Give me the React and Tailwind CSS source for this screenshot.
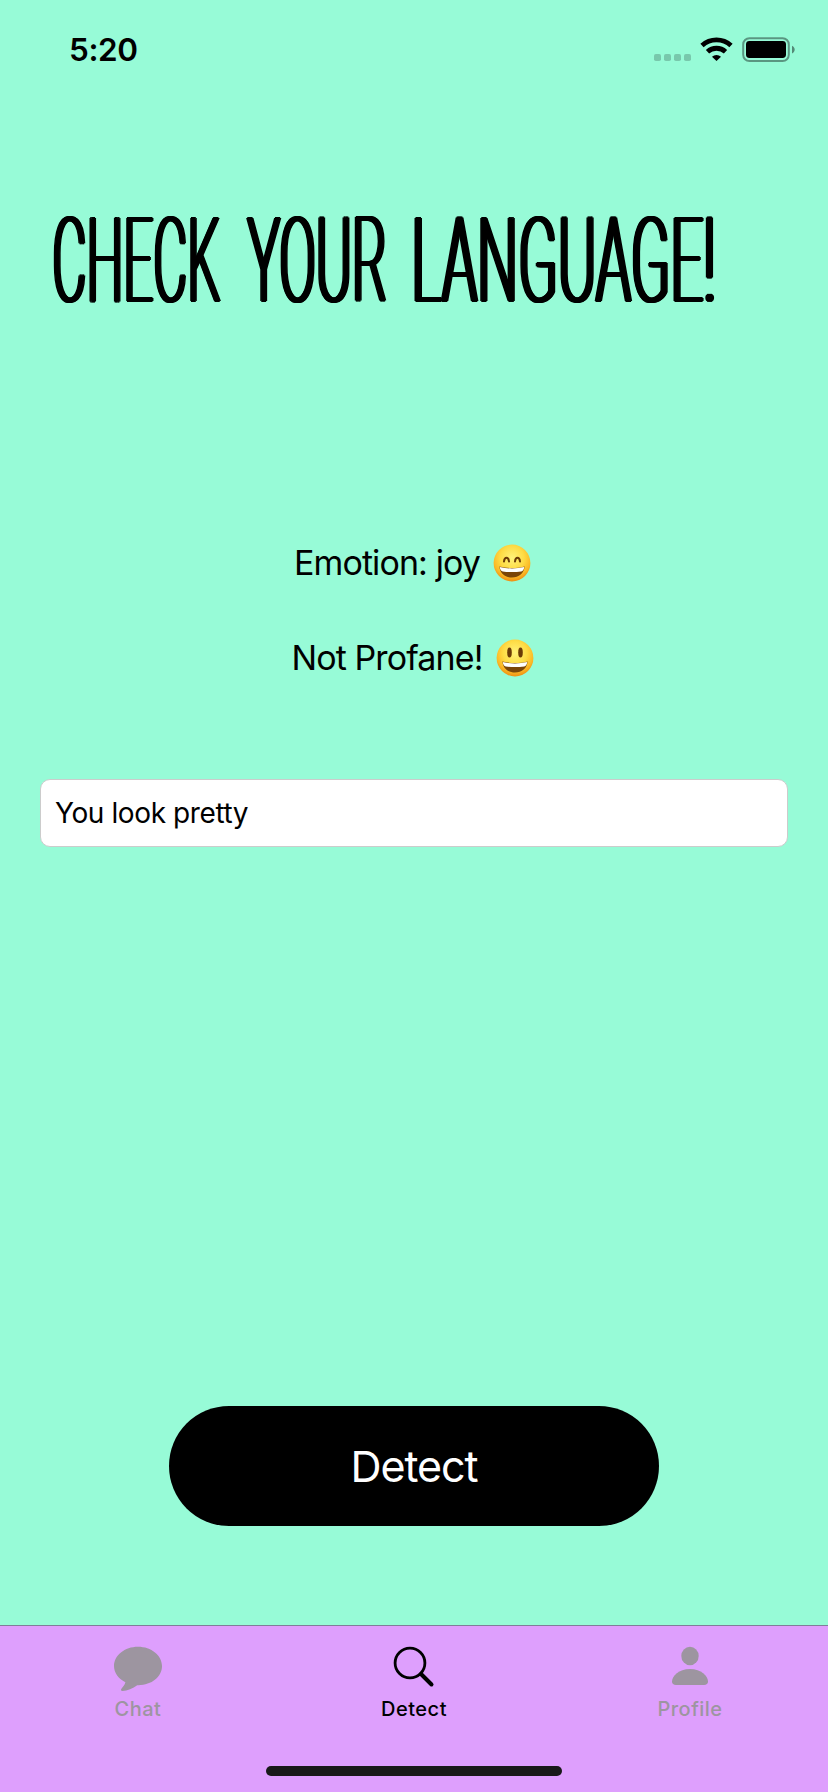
import React, { useState } from 'react';

const titleWords = [
  { text: 'CHECK', box: 'w-[195px]', scale: 'scale-x-[0.438]' },
  { text: 'YOUR', box: 'w-[164px]', scale: 'scale-x-[0.455]' },
  { text: 'LANGUAGE!', box: 'w-[304px]', scale: 'scale-x-[0.485]' },
];

const StatusBar = () => (
  <div className="flex h-[100px] items-center justify-between pl-[69px] pr-[32px]">
    <span className="text-[31.5px] leading-[40px] font-semibold tracking-[-0.4px]">5:20</span>
    <svg width="142" height="26" viewBox="0 0 142 26" fill="none">
      <g fill="#000" fillOpacity="0.2">
        <rect x="0" y="17" width="7" height="7" rx="1.8" />
        <rect x="10" y="17" width="7" height="7" rx="1.8" />
        <rect x="20" y="17" width="7" height="7" rx="1.8" />
        <rect x="30" y="17" width="7" height="7" rx="1.8" />
      </g>
      <g stroke="#000" strokeWidth="4.8">
        <path d="M48 8.6a21.5 21.5 0 0 1 29 0" />
        <path d="M53.5 14.8a13.2 13.2 0 0 1 18 0" />
      </g>
      <path d="M62.5 24l-4.500-4.300a6.500 6.500 0 0 1 9 0z" fill="#000" />
      <rect x="89.200" y="1.200" width="45.600" height="22.800" rx="6.200" stroke="#000" strokeOpacity="0.4" strokeWidth="2" />
      <rect x="92" y="4" width="40" height="17" rx="3.400" fill="#000" />
      <path d="M138 8.800c3.600 1.600 3.600 6 0 7.600z" fill="#000" fillOpacity="0.45" />
    </svg>
  </div>
);

const EmojiFace = ({ id, children }) => (
  <svg width="38" height="38" viewBox="0 0 38 38">
    <defs>
      <radialGradient id={id} cx="0.5" cy="0.36" r="0.64">
        <stop offset="0" stopColor="#fff27a" />
        <stop offset="0.5" stopColor="#fedc45" />
        <stop offset="0.8" stopColor="#fbb926" />
        <stop offset="1" stopColor="#ee8e12" />
      </radialGradient>
    </defs>
    <circle cx="19" cy="19" r="18.4" fill={`url(#${id})`} />
    {children}
    <path d="M6.4 22.6c8 2 17.200 2 25.200 0c-.6 6.800-5.600 11-12.600 11s-12-4.200-12.600-11z" fill="#7a4508" />
    <path d="M6.800 23c8 1.900 16.400 1.900 24.400 0c-.2 2.600-1.200 4-3 4.400c-6 .9-12.400.9-18.400 0c-1.800-.4-2.800-1.800-3-4.400z" fill="#fff" />
  </svg>
);

const ChatIcon = () => (
  <svg width="48" height="46" viewBox="0 0 48 46" fill="currentColor">
    <path d="M24 .8c13.300 0 24 8.600 24 19.300s-10.300 19.100-23.600 19.100h-1.200c-4.400 3.200-9.800 5.500-14.700 5.700c-1.600 0-2-1.300-.9-2.500c1.600-1.800 3.300-3.700 3.800-6.100C4.600 33 0 27 0 20.100C0 9.400 10.700.8 24 .8z" />
  </svg>
);

const SearchIcon = () => (
  <svg width="42" height="42" viewBox="0 0 42 42" fill="none" stroke="currentColor" strokeLinecap="round">
    <circle cx="17" cy="17" r="14.900" strokeWidth="2.800" />
    <path d="M28 28l10.500 10.500" strokeWidth="4" />
  </svg>
);

const ProfileIcon = () => (
  <svg width="36" height="40" viewBox="0 0 36 40" fill="currentColor">
    <ellipse cx="18" cy="10" rx="8.700" ry="9.300" />
    <path d="M4 39c-2.500 0-4-1.200-4-3.400C0 30 6.800 23 18 23s18 7 18 12.600c0 2.200-1.500 3.400-4 3.400z" />
  </svg>
);

const tabs = [
  { name: 'Chat', icon: ChatIcon },
  { name: 'Detect', icon: SearchIcon },
  { name: 'Profile', icon: ProfileIcon },
];

const App = () => {
  const [message, setMessage] = useState('You look pretty');
  const [activeTab, setActiveTab] = useState('Detect');

  return (
    <div className="flex h-[1792px] w-[828px] flex-col overflow-hidden bg-[#97fbd7] font-['Inter',sans-serif] text-black">
      <StatusBar />

      <h1 className="mt-[90px] flex h-[142px] pl-[53px] font-['Roboto',sans-serif] text-[116px] leading-[142px] font-thin whitespace-pre">
        {titleWords.map((word) => (
          <span key={word.text} className={word.box}>
            <span className={`inline-block origin-left tracking-[2.5px] [text-shadow:-6px_0_#000,-4px_-1px_#000,-4px_1px_#000,-2px_-1px_#000,-2px_1px_#000,0_-1px_#000,0_1px_#000,2px_-1px_#000,2px_1px_#000,4px_-1px_#000,4px_1px_#000,6px_0_#000] ${word.scale}`}>
              {word.text}
            </span>
          </span>
        ))}
      </h1>

      <div className="mt-[211px] flex flex-col items-center gap-[55px] pr-[3px] text-[34px] leading-[40px]">
        <p className="flex h-10 items-center gap-[13px]">
          <span className="tracking-[-0.9px]">Emotion: joy</span>
          <EmojiFace id="joy">
            <g stroke="#6b3a06" strokeWidth="2" strokeLinecap="round" fill="none">
              <path d="M11 17.500c.5-5 4.500-5 5 0" />
              <path d="M22 17.500c.5-5 4.500-5 5 0" />
            </g>
          </EmojiFace>
        </p>
        <p className="flex h-10 items-center gap-[13px]">
          <span className="tracking-[-0.9px]">Not Profane!</span>
          <EmojiFace id="clean">
            <ellipse cx="13.500" cy="13.400" rx="2.300" ry="5" fill="#6b3a06" />
            <ellipse cx="24.500" cy="13.400" rx="2.300" ry="5" fill="#6b3a06" />
          </EmojiFace>
        </p>
      </div>

      <input
        type="text"
        value={message}
        onChange={(e) => setMessage(e.target.value)}
        className="mx-10 mt-[101px] h-[68px] rounded-[10px] border border-[#cccccc] bg-white px-3.5 text-[28px] tracking-[-0.4px] outline-none"
      />

      <button className="mx-auto mt-[559px] h-[120px] w-[490px] rounded-full bg-black text-[43px] font-normal tracking-[-1.1px] text-white">
        Detect
      </button>

      <div className="mt-auto h-[167px] border-t border-[#7f7f99] bg-[#de9ffd]">
        <div className="flex h-[108px]">
          {tabs.map(({ name, icon: Icon }) => (
            <button
              key={name}
              onClick={() => setActiveTab(name)}
              className={`flex flex-1 flex-col items-center pt-5 ${activeTab === name ? 'text-black' : 'text-[#9d95a0]'}`}
            >
              <span className="flex h-[50px] items-start">
                <Icon />
              </span>
              <span className="text-[20px] leading-[26px] font-medium tracking-[0.5px]">{name}</span>
            </button>
          ))}
        </div>
        <div className="mx-auto mt-[32px] h-[10px] w-[296px] rounded-full bg-[#191919]" />
      </div>
    </div>
  );
};

export default App;
